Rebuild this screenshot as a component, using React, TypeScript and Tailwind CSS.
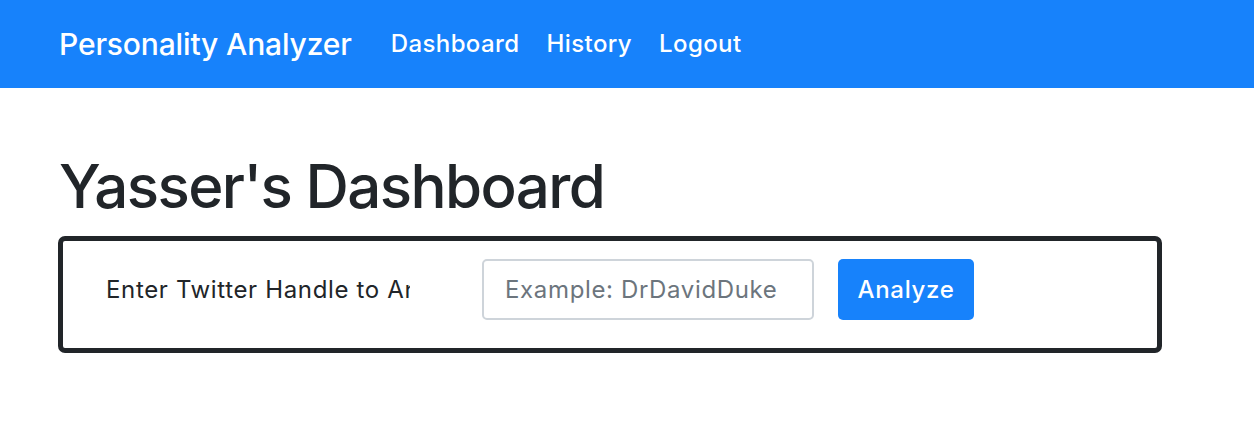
import { useState } from "react";

export default function App() {
  const [handle, setHandle] = useState("");

  return (
    <div className="min-h-screen bg-white font-['Inter',_'Liberation_Sans',_sans-serif] text-[#212529]">
      {/* ナビゲーション */}
      <nav className="flex h-[88px] items-center bg-[#1782fb] pl-[59px] text-white">
        <a className="mr-[39px] text-[30px] font-medium leading-none tracking-[-0.15px]">Personality Analyzer</a>
        <ul className="flex items-center gap-[27px] text-[24px] font-medium leading-none tracking-[0.4px]">
          <li>Dashboard</li>
          <li>History</li>
          <li>Logout</li>
        </ul>
      </nav>

      <main className="pl-[58px] pt-[62px]">
        <h1 className="pl-[1px] text-[60px] font-medium leading-[72px] tracking-[-1.6px]">Yasser's Dashboard</h1>

        <div className="mt-[14px] w-[1104px] rounded-[7px] border-[5px] border-[#212529] pb-[28px] pl-[43px] pt-[18px]">
          <form className="flex items-center tracking-[0.65px]" onSubmit={(e) => e.preventDefault()}>
            <label className="w-[304px] overflow-hidden whitespace-nowrap text-[24px] leading-none">
              Enter Twitter Handle to Analyze
            </label>
            <input
              value={handle}
              onChange={(e) => setHandle(e.target.value)}
              placeholder="Example: DrDavidDuke"
              className="ml-[72px] h-[61px] w-[332px] rounded-[5px] border-2 border-[#ced4da] px-[21px] text-[24px] text-[#495057] outline-none placeholder:text-[#6c757d]"
            />
            <button className="ml-[24px] h-[61px] w-[136px] rounded-[5px] bg-[#1782fb] text-[24px] font-medium text-white">
              Analyze
            </button>
          </form>
        </div>
      </main>
    </div>
  );
}
